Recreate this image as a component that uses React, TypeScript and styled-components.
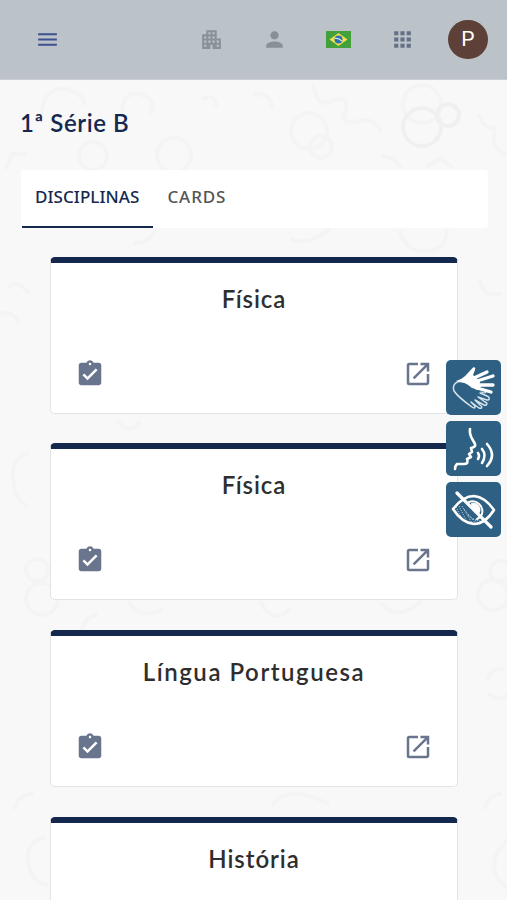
import React from "react";
import styled, { createGlobalStyle } from "styled-components";
import {
  MdApartment,
  MdApps,
  MdAssignmentTurnedIn,
  MdMenu,
  MdOpenInNew,
  MdPerson,
} from "react-icons/md";

const GlobalStyle = createGlobalStyle`
  *, *::before, *::after { box-sizing: border-box; }
  html, body { margin: 0; height: 100%; overflow: hidden; }
  body { background: #f8f8f8; font-family: Lato, "Open Sans", sans-serif; }
  button { border: 0; padding: 0; background: none; font: inherit; color: inherit; }
  svg { display: block; flex: none; }
`;

const Page = styled.div`
  position: relative;
  height: 900px;
  overflow: hidden;
  isolation: isolate;
`;

const Backdrop = styled.svg`
  position: absolute;
  inset: 0;
  z-index: -1;
`;

const Header = styled.header`
  height: 80px;
  padding: 0 19.5px 0 35px;
  display: flex;
  align-items: center;
  justify-content: space-between;
  background: #bbc3c9;
  border-bottom: 1px solid #c9cfd4;
`;

const HeaderActions = styled.div`
  display: flex;
  align-items: center;
`;

const IconButton = styled.button<{ $color: string; $gap?: number }>`
  display: flex;
  color: ${(p) => p.$color};
  font-size: 25px;
  margin-right: ${(p) => p.$gap ?? 0}px;
`;

const Avatar = styled.div`
  width: 39.5px;
  height: 39.5px;
  border-radius: 50%;
  display: grid;
  place-items: center;
  background: #5d4037;
  color: #fff;
  font: 400 21px/1 Roboto, sans-serif;
`;

const ClassTitle = styled.h1`
  margin: 27px 0 0 20px;
  height: 32px;
  font-size: 24px;
  line-height: 32px;
  font-weight: 600;
  letter-spacing: 0.55px;
  color: #152850;
`;

const Tabs = styled.nav`
  margin: 31px 19px 0 21px;
  height: 58px;
  display: flex;
  background: #fff;
  border-radius: 4px;
`;

const Tab = styled.button<{ $active?: boolean; $spacing: number }>`
  height: 58px;
  padding: 0 14px 3px ${(p) => (p.$active ? 13 : 14)}px;
  margin-left: ${(p) => (p.$active ? 1 : 0)}px;
  font-family: "Noto Sans", sans-serif;
  font-size: 17px;
  font-weight: 500;
  letter-spacing: ${(p) => p.$spacing}px;
  color: ${(p) => (p.$active ? "#152850" : "#555")};
  border-bottom: 2px solid ${(p) => (p.$active ? "#15294d" : "transparent")};
`;

const CardList = styled.main`
  padding: 28.6px 49px 0 50px;
  display: flex;
  flex-direction: column;
  gap: 29.8px;
`;

const Card = styled.article`
  height: 157px;
  flex: none;
  display: flex;
  flex-direction: column;
  justify-content: space-between;
  padding: 20px 24px 24px;
  background: #fff;
  border: 1px solid #e2e3e4;
  border-top: 6px solid #14274c;
  border-radius: 5px;
`;

const CardTitle = styled.h2<{ $spacing: number }>`
  margin: 0;
  font-size: 24px;
  line-height: 32px;
  font-weight: 600;
  text-align: center;
  letter-spacing: ${(p) => p.$spacing}px;
  color: #2e2e2e;
`;

const CardActions = styled.div`
  display: flex;
  justify-content: space-between;
  font-size: 30px;
  color: #69758c;
`;

const AssistDock = styled.aside`
  position: absolute;
  right: 6px;
  top: 360px;
  display: flex;
  flex-direction: column;
  gap: 6px;
`;

const AssistButton = styled.button`
  width: 55px;
  height: 55px;
  border-radius: 5px;
  background: #2d6083;
`;

const BrazilFlag = () => (
  <svg width="25" height="17" viewBox="0 0 25 17">
    <rect width="25" height="17" fill="#43a03c" />
    <path d="M12.5 2 21.5 8.5 12.5 15 3.5 8.5Z" fill="#f2e14c" />
    <circle cx="12.5" cy="8.5" r="4" fill="#2e71ae" />
    <path d="M9 7.3q4-.4 7 2.8" stroke="#e4eff5" strokeWidth="1.2" fill="none" />
  </svg>
);

const HandsIcon = () => (
  <svg width="55" height="55" viewBox="0 0 55 55" fill="none" strokeLinecap="round" strokeLinejoin="round">
    <path
      d="M17 22C10 20 6 25 8 31C12 37 19 42 26 47C29 49 30 47 28 45L25 42L33 48C36 49 37 47 34 45L29 40L38 45C41 46 42 43 39 42L32 37L41 40C44 40 44 37 41 36L34 33"
      stroke="#d4e2eb"
      strokeWidth="1.5"
    />
    <path d="M35 32L39 33Q41 32 39 31L36 30" stroke="#d4e2eb" strokeWidth="1.2" />
    <path d="M10 21Q17 19 21 14L27 7.500Q30 6.500 29 10L27 15L34 21L33 30L26 28Q20 22 10 21Z" fill="#fff" />
    <path d="M28 18L41 12M31 21L47 16M32 25L47 25M31 28L45 32" stroke="#fff" strokeWidth="3.3" />
    <path d="M24 19L31 26" stroke="#fff" strokeWidth="7" />
  </svg>
);

const VoiceIcon = () => (
  <svg width="55" height="55" viewBox="0 0 55 55" fill="none" stroke="#fff" strokeWidth="2.6" strokeLinecap="round" strokeLinejoin="round">
    <path d="M24 8C23 15 26 17 29 23Q30 26 25 27L26 31L23 33L25 36L21 38Q23 43 18 43L11 43Q9 45 9 48" />
    <path d="M32 32Q34 34.500 32 38M36 28Q41 34 36 42M41 23Q51 34 41 45" />
  </svg>
);

const LowVisionIcon = () => (
  <svg width="55" height="55" viewBox="0 0 55 55" fill="none" stroke="#fff" strokeLinecap="round" strokeLinejoin="round">
    <path d="M10 25L16 37M13 24L21 40M16 24L26 41M18 27L30 42M22 33L34 42M27 37L37 40" stroke="#c7d8e3" strokeWidth="1" strokeDasharray="1 1.2" strokeLinecap="butt" />
    <path d="M7 27Q17 14 28 14Q39 15 48 28Q39 42 28 42Q16 41 7 27Z" strokeWidth="2.6" />
    <path d="M23 20A10 10 0 0 1 36 32Q34 36 31 37" strokeWidth="2" />
    <path d="M26 22A6 6 0 0 1 33 30Q28 29 26 22Z" fill="#fff" strokeWidth="2" />
    <path d="M11 11L45 45" strokeWidth="3.2" />
  </svg>
);

const Doodles = () => (
  <Backdrop width="507" height="900" viewBox="0 0 507 900" fill="none" stroke="#f4f4f4" strokeWidth="4" strokeLinecap="round" aria-hidden="true">
    <path d="M42 112Q44 87 67 89Q82 93 85 104M122 112Q122 92 139 94Q157 99 151 112M203 99Q214 93 216 105M255 94Q272 94 272 108M313 85Q318 110 333 100Q352 96 344 113Q343 127 362 120Q378 120 380 132" />
    <circle cx="93" cy="156" r="14" />
    <circle cx="174" cy="155" r="17" />
    <circle cx="309" cy="131" r="18" />
    <circle cx="321" cy="147" r="11" />
    <circle cx="422" cy="104" r="19" />
    <circle cx="422" cy="127" r="19" stroke="#f0f0f0" />
    <circle cx="448" cy="115" r="11" stroke="#f0f0f0" />
    <path d="M383 156Q394 157 400 167M428 166L440 159 452 167M479 116Q484 128 495 129Q490 147 504 154M6 168L12 154 25 154M25 207Q33 203 39 214" />
    <path d="M135 243Q152 243 155 228M292 239Q308 247 329 229M400 232Q410 260 439 248Q446 242 447 231" />
    <path d="M10 286Q18 280 29 293M0 314Q12 310 18 321M27 454Q9 460 14 482Q14 498 27 506M480 282Q485 298 500 294" />
    <path d="M118 421Q128 435 139 423" />
    <circle cx="42" cy="599" r="16" />
    <circle cx="37" cy="570" r="11" />
    <path d="M130 603Q139 619 161 610M82 629Q85 617 96 615M261 603Q272 625 289 610M382 604Q397 622 420 602" />
    <circle cx="493" cy="595" r="15" />
    <circle cx="500" cy="571" r="10" />
    <path d="M488 679Q490 668 502 669M489 694Q497 702 507 696" />
    <path d="M15 808Q18 795 32 794M273 804Q286 788 312 797L328 803M485 808Q488 795 500 794" />
    <path d="M44 838Q23 843 29 866Q33 883 47 885M507 841Q488 857 497 878L507 887" />
  </Backdrop>
);

const subjects = [
  { name: "Física", spacing: 0.9 },
  { name: "Física", spacing: 0.9 },
  { name: "Língua Portuguesa", spacing: 1.55 },
  { name: "História", spacing: 0.95 },
];

const assistTools = [
  { label: "Libras", Icon: HandsIcon },
  { label: "Voz", Icon: VoiceIcon },
  { label: "Baixa visão", Icon: LowVisionIcon },
];

export default function App() {
  return (
    <>
      <GlobalStyle />
      <Page>
        <Doodles />
        <Header>
          <IconButton $color="#3f4f94" aria-label="Menu"><MdMenu /></IconButton>
          <HeaderActions>
            <IconButton $color="#8a9299" $gap={38.5} aria-label="Escola"><MdApartment /></IconButton>
            <IconButton $color="#879096" $gap={39} aria-label="Perfil"><MdPerson /></IconButton>
            <IconButton $color="#43a03c" $gap={38.5} aria-label="Idioma"><BrazilFlag /></IconButton>
            <IconButton $color="#657087" $gap={33.5} aria-label="Aplicativos"><MdApps /></IconButton>
            <Avatar>P</Avatar>
          </HeaderActions>
        </Header>
        <ClassTitle>1ª Série B</ClassTitle>
        <Tabs>
          <Tab $active $spacing={0.06}>DISCIPLINAS</Tab>
          <Tab $spacing={0.9}>CARDS</Tab>
        </Tabs>
        <CardList>
          {subjects.map((subject, index) => (
            <Card key={index}>
              <CardTitle $spacing={subject.spacing}>{subject.name}</CardTitle>
              <CardActions>
                <MdAssignmentTurnedIn />
                <MdOpenInNew />
              </CardActions>
            </Card>
          ))}
        </CardList>
        <AssistDock>
          {assistTools.map(({ label, Icon }) => (
            <AssistButton key={label} aria-label={label}><Icon /></AssistButton>
          ))}
        </AssistDock>
      </Page>
    </>
  );
}
